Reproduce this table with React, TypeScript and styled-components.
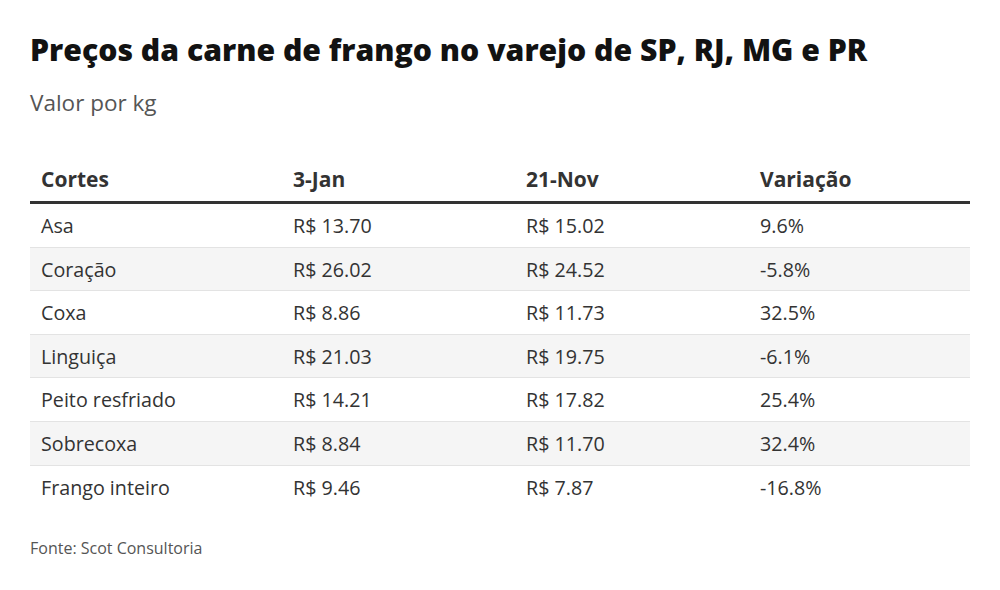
import React from 'react';
import styled, { createGlobalStyle } from 'styled-components';

const GlobalStyle = createGlobalStyle`
  html, body {
    margin: 0;
    padding: 0;
    background: #fff;
  }
  body {
    font-family: 'Open Sans', 'Liberation Sans', sans-serif;
    color: #333;
  }
`;

const Page = styled.div`
  width: 1000px;
  height: 590px;
  box-sizing: border-box;
  padding: 31px 30px 0;
  background: #fff;
`;

const Title = styled.h1`
  margin: 0;
  font-size: 30.2px;
  line-height: 38px;
  font-weight: 800;
  letter-spacing: 0;
  color: #121212;
  white-space: nowrap;
`;

const Subtitle = styled.p`
  margin: 20px 0 0;
  font-size: 22.5px;
  line-height: 28px;
  color: #555;
`;

const Table = styled.table`
  width: 940px;
  margin-top: 49px;
  border-collapse: collapse;
  table-layout: fixed;
`;

const HeadCell = styled.th`
  padding: 0 11px 9px;
  text-align: left;
  font-size: 21px;
  line-height: 26px;
  font-weight: 700;
  color: #333;
  border-bottom: 3px solid #333;
`;

const Row = styled.tr<{ $shaded: boolean; $last: boolean }>`
  background: ${(p) => (p.$shaded ? '#f5f5f5' : '#fff')};
  border-bottom: ${(p) => (p.$last ? 'none' : '1px solid #e3e3e3')};
`;

const Cell = styled.td`
  padding: 10px 11px 8.6px;
  font-size: 19.7px;
  line-height: 24px;
  color: #333;
  white-space: nowrap;
`;

const Source = styled.p`
  margin: 29px 0 0;
  font-size: 16px;
  line-height: 22px;
  color: #555;
`;

const columns = ['Cortes', '3-Jan', '21-Nov', 'Variação'];
const widths = [252, 233, 234, 221];

const rows = [
  ['Asa', 'R$ 13.70', 'R$ 15.02', '9.6%'],
  ['Coração', 'R$ 26.02', 'R$ 24.52', '-5.8%'],
  ['Coxa', 'R$ 8.86', 'R$ 11.73', '32.5%'],
  ['Linguiça', 'R$ 21.03', 'R$ 19.75', '-6.1%'],
  ['Peito resfriado', 'R$ 14.21', 'R$ 17.82', '25.4%'],
  ['Sobrecoxa', 'R$ 8.84', 'R$ 11.70', '32.4%'],
  ['Frango inteiro', 'R$ 9.46', 'R$ 7.87', '-16.8%'],
];

export default function App() {
  return (
    <Page>
      <GlobalStyle />
      <Title>Preços da carne de frango no varejo de SP, RJ, MG e PR</Title>
      <Subtitle>Valor por kg</Subtitle>
      <Table>
        <colgroup>
          {widths.map((w, i) => (
            <col key={i} style={{ width: w }} />
          ))}
        </colgroup>
        <thead>
          <tr>
            {columns.map((c) => (
              <HeadCell key={c}>{c}</HeadCell>
            ))}
          </tr>
        </thead>
        <tbody>
          {rows.map((r, i) => (
            <Row key={r[0]} $shaded={i % 2 === 1} $last={i === rows.length - 1}>
              {r.map((v, j) => (
                <Cell key={j}>{v}</Cell>
              ))}
            </Row>
          ))}
        </tbody>
      </Table>
      <Source>Fonte: Scot Consultoria</Source>
    </Page>
  );
}
